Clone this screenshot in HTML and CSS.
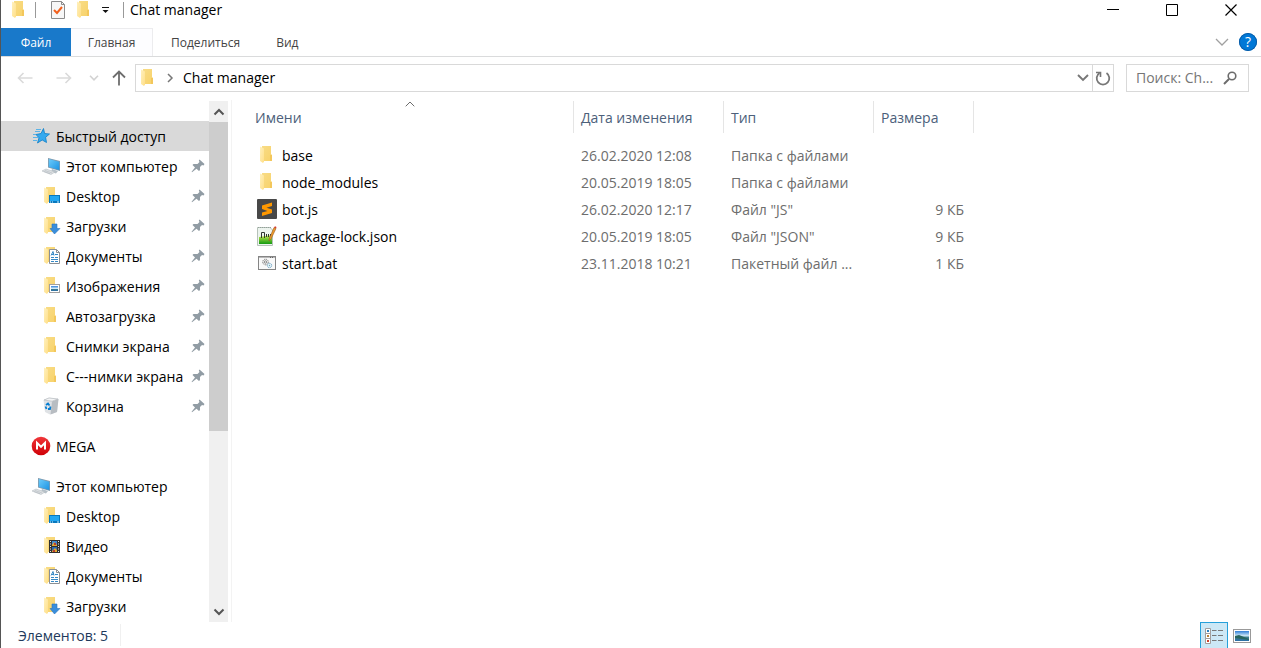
FILE: index.html
```html
<!DOCTYPE html>
<html lang="ru">
<head>
<meta charset="utf-8">
<meta name="viewport" content="width=device-width, initial-scale=1">
<title>Chat manager</title>
<link rel="stylesheet" href="styles.css">
</head>
<body>
<svg class="sprite" aria-hidden="true">
  <defs>
    <linearGradient id="g-back" x1="0" y1="0" x2="1" y2="1"><stop offset="0" stop-color="#f8dc86"/><stop offset="1" stop-color="#f8d26a"/></linearGradient>
    <linearGradient id="g-flap" x1="0" y1="0" x2="1" y2="1"><stop offset="0" stop-color="#fff0bd"/><stop offset="1" stop-color="#ffdf88"/></linearGradient>
    <linearGradient id="g-screen" x1="0" y1="0" x2="1" y2="1"><stop offset="0" stop-color="#6ccbfa"/><stop offset="1" stop-color="#1c93e3"/></linearGradient>
    <linearGradient id="g-mega" x1="0" y1="0" x2="0" y2="1"><stop offset="0" stop-color="#f0373a"/><stop offset="1" stop-color="#cf0007"/></linearGradient>
    <linearGradient id="g-green" x1="0" y1="0" x2="0" y2="1"><stop offset="0" stop-color="#c9e94e"/><stop offset="1" stop-color="#149a12"/></linearGradient>
    <linearGradient id="g-photo" x1="0" y1="0" x2="0" y2="1"><stop offset="0" stop-color="#2f7fd8"/><stop offset="0.5" stop-color="#d5edf8"/><stop offset="0.6" stop-color="#3f7f8c"/><stop offset="1" stop-color="#2b6fa8"/></linearGradient>
    <symbol id="folder" viewBox="0 0 20 20">
      <path d="M5 1H14V9L15 10V16H5Z" fill="url(#g-back)"/>
      <path d="M13 10H15V16H13Z" fill="#f3c75c"/>
      <path d="M3 1.500L7 3.500V16.500L6 18L3 16Z" fill="url(#g-flap)"/>
    </symbol>
    <symbol id="computer" viewBox="0 0 20 20">
      <path d="M7 2L19 5V15L7 11.500Z" fill="#7f98ab"/>
      <path d="M7.800 3L18.300 5.700V14L7.800 11Z" fill="url(#g-screen)"/>
      <path d="M11 13L17 15L15 17.500L10 16Z" fill="#b4bfc7"/>
      <path d="M1 15L5 13L14 16L10 18.500Z" fill="#dce0e3" stroke="#b7bdc2" stroke-width=".6"/>
      <path d="M4 14.500L11 17M3 15.500L9 17.700" stroke="#aeb5bb" stroke-width=".5"/>
    </symbol>
    <symbol id="desktop" viewBox="0 0 20 20">
      <use href="#folder"/>
      <rect x="8" y="9" width="11" height="8" fill="#0878bd"/><rect x="9" y="10" width="9" height="5" fill="#22a7f2"/>
      <path d="M9 16H10M11 16H12M16 16H18" stroke="#d8f1ff"/>
    </symbol>
    <symbol id="downloads" viewBox="0 0 20 20">
      <use href="#folder"/>
      <path d="M11 8H16V12.500H19L13.500 18L9 12.500H11Z" fill="#3a8edb" stroke="#2875bd" stroke-width=".6"/>
    </symbol>
    <symbol id="documents" viewBox="0 0 20 20">
      <use href="#folder"/>
      <path d="M8.500 3.500H15.500L18.500 6.500V17.500H8.500Z" fill="#fff" stroke="#8b8f93"/>
      <path d="M15.500 3.500V6.500H18.500" fill="none" stroke="#8b8f93"/>
      <path d="M10 9.500L12 5.500L13 9.500M10.500 8.500H13M14 8.500H17M10 11.500H13M14 11.500H17M10 13.500H17M10 15.500H13M14 15.500H17" fill="none" stroke="#3689c5"/>
    </symbol>
    <symbol id="pictures" viewBox="0 0 20 20">
      <use href="#folder"/>
      <rect x="8.500" y="8.500" width="10" height="8" fill="#fff" stroke="#a0a0a0"/>
      <rect x="10" y="10" width="7" height="5" fill="url(#g-photo)"/>
    </symbol>
    <symbol id="video" viewBox="0 0 20 20">
      <use href="#folder"/>
      <rect x="8" y="4" width="11" height="13" fill="#303030"/>
      <path d="M9.500 5V17M17.500 5V17" stroke="#e8e8e8" stroke-dasharray="1 1.500"/>
      <rect x="11" y="5" width="5" height="5" fill="#3c86d2"/><rect x="11" y="11" width="5" height="5" fill="#2c69b1"/>
      <path d="M11 9L13 6L16 9V10H11ZM11 15L14 12L16 14V16H11Z" fill="#e1a82f"/>
      <path d="M13 7H15V9H13ZM12 14H14V16H12Z" fill="#b93c31"/>
    </symbol>
    <symbol id="bin" viewBox="0 0 20 20">
      <path d="M2.500 4L8 1.500L17.500 3L16 16L9 18.500L4 16Z" fill="#dfe2e5"/>
      <path d="M11 5.500L17.500 3L16 16L9.500 18.500Z" fill="#b8bdc2"/>
      <path d="M3 4L8 2L17 3L11 5.200Z" fill="#f4f5f6" stroke="#aeb4b9" stroke-width=".6"/>
      <path d="M5 9L7 7.500L8.500 9.500M9.500 10.500L9 13H7M5.500 13L4.500 10.500" fill="none" stroke="#087ed1" stroke-width="1.800"/>
    </symbol>
    <symbol id="star" viewBox="0 0 20 20">
      <path d="M12.500 2.500L13.600 7.500L18.500 8L14.600 11.300L15.500 16.500L11.200 14L6.500 17L8 11.800L5 8.500L10 7.500Z" fill="#35a9ef" stroke="#0c7dc7" stroke-width=".8"/>
      <path d="M5 3.500H10M4 5.500H9M2 8.500H5M2 11.500H7M2 14.500H6" stroke="#4cafe9" stroke-width=".9"/>
    </symbol>
    <symbol id="mega" viewBox="0 0 20 20">
      <circle cx="10" cy="10" r="9.300" fill="url(#g-mega)"/>
      <path d="M6 13.500V6.800L10 10.800L14 6.800V13.500" fill="none" stroke="#fff" stroke-width="2"/>
    </symbol>
    <symbol id="pin" viewBox="0 0 14 14">
      <path d="M8.500 .5L13.500 5L12.500 6.500L11 6L9 8V11L8 12L5.500 9.700L1 13.200L.6 12.800L4 8.500L1.500 6L2.500 5H6.500L8.500 3L7.800 1.500Z" fill="#919ca4"/>
    </symbol>
    <symbol id="sublime" viewBox="0 0 20 20">
      <rect width="20" height="20" rx="1" fill="#484848"/>
      <path d="M15 3.500V7L9.500 8.700L15 10.500V14L5 17V13.600L10.500 11.900L5 10V6.600Z" fill="#ff9800"/>
    </symbol>
    <symbol id="notepad" viewBox="0 0 20 20">
      <path d="M.5 1.500H13L15.500 4V19.500H.5Z" fill="#edf4ef" stroke="#b6c2b9"/>
      <path d="M1 1.500H15" stroke="#93a09a" stroke-dasharray="1 1"/>
      <path d="M2 11L15 9V18H2Z" fill="url(#g-green)"/>
      <path d="M4.500 12V6.500H7.500V12M9.500 11V8M11.500 11V8M13.500 10V8" fill="none" stroke="#303630"/>
      <path d="M17 1.500L19 2.500L14 13L12 15L12.500 12Z" fill="#ee9b29" stroke="#995a27" stroke-width=".6"/>
      <path d="M17 1.500L18 .3L19.500 1L19 2.500Z" fill="#d33d33"/>
    </symbol>
    <symbol id="batch" viewBox="0 0 20 20">
      <rect x="1.500" y="3.500" width="17" height="13" fill="#f9f9f9" stroke="#858585"/>
      <path d="M2 4.500H18" stroke="#b9b9b9"/><path d="M13 4.500H17" stroke="#666" stroke-dasharray="1 1"/>
      <circle cx="8.500" cy="9" r="2.800" fill="#eee" stroke="#7a7a7a" stroke-dasharray="1.200 .7"/><circle cx="8.500" cy="9" r="1.200" fill="none" stroke="#777" stroke-width=".8"/>
      <circle cx="12.500" cy="12.500" r="2.200" fill="#e6f4fc" stroke="#6d9fbd" stroke-dasharray="1.200 .6"/><circle cx="12.500" cy="12.500" r=".7" fill="#7aa"/>
    </symbol>
  </defs>
</svg>

<div class="window">
  <header class="titlebar">
    <svg class="icon"><use href="#folder"/></svg>
    <span class="bar bar-first"></span>
    <button class="plain quick" aria-label="Свойства"><svg width="16" height="20" viewBox="0 0 16 20"><path d="M1.500 1.500H11.500L14.500 4.500V18.500H1.500Z" fill="#f7f7f7" stroke="#8c8c8c"/><path d="M11.500 1.500V4.500H14.500" fill="none" stroke="#8c8c8c"/><path d="M4 10L7 13L12 7" fill="none" stroke="#f1601d" stroke-width="2"/></svg></button>
    <button class="plain" aria-label="Новая папка"><svg class="icon"><use href="#folder"/></svg></button>
    <button class="plain customize" aria-label="Настройка панели"><svg width="8" height="8" viewBox="0 0 8 8"><path d="M0 1.500H7" stroke="#111"/><path d="M.5 4H6.500L3.500 7Z" fill="#111"/></svg></button>
    <span class="bar"></span>
    <h1 class="title">Chat manager</h1>
    <div class="controls">
      <button class="plain" aria-label="Свернуть"><svg width="12" height="12" viewBox="0 0 12 12"><path d="M0 5.500H12" stroke="#000"/></svg></button>
      <button class="plain" aria-label="Развернуть"><svg width="12" height="12" viewBox="0 0 12 12"><path d="M.5.5H11.500V11.500H.5Z" fill="none" stroke="#000"/></svg></button>
      <button class="plain" aria-label="Закрыть"><svg width="12" height="12" viewBox="0 0 12 12"><path d="M.5.5L11.500 11.500M11.500.5L.5 11.500" stroke="#000" stroke-width="1.200"/></svg></button>
    </div>
  </header>

  <nav class="ribbon">
    <button class="tab tab-file">Файл</button>
    <button class="tab tab-home">Главная</button>
    <button class="tab">Поделиться</button>
    <button class="tab">Вид</button>
    <div class="ribbon-end">
      <button class="plain" aria-label="Развернуть ленту"><svg width="14" height="8" viewBox="0 0 14 8"><path d="M1 1L7 7L13 1" fill="none" stroke="#a0a0a0" stroke-width="1.300"/></svg></button>
      <button class="plain help" aria-label="Справка">?</button>
    </div>
  </nav>

  <div class="address-row">
    <button class="plain" aria-label="Назад"><svg width="16" height="12" viewBox="0 0 16 12"><path d="M15.500 6H1.500M6.500 1L1.500 6L6.500 11" fill="none" stroke="#dadada" stroke-width="1.600"/></svg></button>
    <button class="plain forward" aria-label="Вперёд"><svg width="16" height="12" viewBox="0 0 16 12"><path d="M.5 6H14.500M9.500 1L14.500 6L9.500 11" fill="none" stroke="#dadada" stroke-width="1.600"/></svg></button>
    <button class="plain recent" aria-label="Последние"><svg width="10" height="6" viewBox="0 0 10 6"><path d="M1 .8L5 4.800L9 .8" fill="none" stroke="#d2d2d2" stroke-width="1.600"/></svg></button>
    <button class="plain up" aria-label="Вверх"><svg width="14" height="16" viewBox="0 0 14 16"><path d="M7 15.500V1.500M1 7.500L7 1.500L13 7.500" fill="none" stroke="#6e6e6e" stroke-width="1.800"/></svg></button>
    <div class="address">
      <svg class="icon"><use href="#folder"/></svg>
      <svg class="crumb" width="7" height="10" viewBox="0 0 7 10"><path d="M1 1L5 5L1 9" fill="none" stroke="#777" stroke-width="1.500"/></svg>
      <span class="path">Chat manager</span>
      <button class="plain expand" aria-label="Журнал"><svg width="12" height="8" viewBox="0 0 12 8"><path d="M1 1L6 6L11 1" fill="none" stroke="#777" stroke-width="1.900"/></svg></button>
      <button class="plain refresh" aria-label="Обновить"><svg width="16" height="16" viewBox="0 0 16 16"><path d="M4.500 3A6.300 6.300 0 1 0 11.500 3" fill="none" stroke="#777" stroke-width="1.800"/><path d="M1 2.500H5.500V7" fill="none" stroke="#777" stroke-width="1.600"/></svg></button>
    </div>
    <div class="search">
      <input class="search-input" type="text" aria-label="Поиск" placeholder="Поиск: Ch...">
      <svg width="14" height="14" viewBox="0 0 14 14"><circle cx="9" cy="5" r="3.800" fill="none" stroke="#6c6c6c" stroke-width="1.600"/><path d="M6 8L1 13" stroke="#6c6c6c" stroke-width="2"/></svg>
    </div>
  </div>

  <main class="content">
    <aside class="sidebar">
      <div class="tree">
        <ul class="group">
          <li class="node node-top selected"><svg class="icon"><use href="#star"/></svg><span class="label">Быстрый доступ</span></li>
          <li class="node"><svg class="icon"><use href="#computer"/></svg><span class="label">Этот компьютер</span><svg class="pin"><use href="#pin"/></svg></li>
          <li class="node"><svg class="icon"><use href="#desktop"/></svg><span class="label">Desktop</span><svg class="pin"><use href="#pin"/></svg></li>
          <li class="node"><svg class="icon"><use href="#downloads"/></svg><span class="label">Загрузки</span><svg class="pin"><use href="#pin"/></svg></li>
          <li class="node"><svg class="icon"><use href="#documents"/></svg><span class="label">Документы</span><svg class="pin"><use href="#pin"/></svg></li>
          <li class="node"><svg class="icon"><use href="#pictures"/></svg><span class="label">Изображения</span><svg class="pin"><use href="#pin"/></svg></li>
          <li class="node"><svg class="icon"><use href="#folder"/></svg><span class="label">Автозагрузка</span><svg class="pin"><use href="#pin"/></svg></li>
          <li class="node"><svg class="icon"><use href="#folder"/></svg><span class="label">Снимки экрана</span><svg class="pin"><use href="#pin"/></svg></li>
          <li class="node"><svg class="icon"><use href="#folder"/></svg><span class="label">С---нимки экрана</span><svg class="pin"><use href="#pin"/></svg></li>
          <li class="node"><svg class="icon"><use href="#bin"/></svg><span class="label">Корзина</span><svg class="pin"><use href="#pin"/></svg></li>
        </ul>
        <ul class="group">
          <li class="node node-top"><svg class="icon"><use href="#mega"/></svg><span class="label">MEGA</span></li>
        </ul>
        <ul class="group">
          <li class="node node-top"><svg class="icon"><use href="#computer"/></svg><span class="label">Этот компьютер</span></li>
          <li class="node"><svg class="icon"><use href="#desktop"/></svg><span class="label">Desktop</span></li>
          <li class="node"><svg class="icon"><use href="#video"/></svg><span class="label">Видео</span></li>
          <li class="node"><svg class="icon"><use href="#documents"/></svg><span class="label">Документы</span></li>
          <li class="node"><svg class="icon"><use href="#downloads"/></svg><span class="label">Загрузки</span></li>
        </ul>
      </div>
      <div class="scrollbar">
        <button class="plain arrow" aria-label="Прокрутить вверх"><svg width="12" height="8" viewBox="0 0 12 8"><path d="M1.500 6.500L6 2L10.500 6.500" fill="none" stroke="#555" stroke-width="2"/></svg></button>
        <div class="track"><div class="thumb"></div></div>
        <button class="plain arrow" aria-label="Прокрутить вниз"><svg width="12" height="8" viewBox="0 0 12 8"><path d="M1.500 1.500L6 6L10.500 1.500" fill="none" stroke="#555" stroke-width="2"/></svg></button>
      </div>
    </aside>

    <section class="files">
      <table class="file-table">
        <colgroup><col class="col-name"><col class="col-date"><col class="col-type"><col class="col-size"></colgroup>
        <thead>
          <tr><th class="sorted">Имени<svg class="sort" width="10" height="6" viewBox="0 0 10 6"><path d="M.7 5.300L5 1L9.300 5.300" fill="none" stroke="#6d6d6d"/></svg></th><th>Дата изменения</th><th>Тип</th><th>Размера</th></tr>
        </thead>
        <tbody>
          <tr><td><span class="file"><svg class="icon"><use href="#folder"/></svg>base</span></td><td>26.02.2020 12:08</td><td>Папка с файлами</td><td></td></tr>
          <tr><td><span class="file"><svg class="icon"><use href="#folder"/></svg>node_modules</span></td><td>20.05.2019 18:05</td><td>Папка с файлами</td><td></td></tr>
          <tr><td><span class="file"><svg class="icon"><use href="#sublime"/></svg>bot.js</span></td><td>26.02.2020 12:17</td><td>Файл "JS"</td><td>9 КБ</td></tr>
          <tr><td><span class="file"><svg class="icon"><use href="#notepad"/></svg>package-lock.json</span></td><td>20.05.2019 18:05</td><td>Файл "JSON"</td><td>9 КБ</td></tr>
          <tr><td><span class="file"><svg class="icon"><use href="#batch"/></svg>start.bat</span></td><td>23.11.2018 10:21</td><td>Пакетный файл ...</td><td>1 КБ</td></tr>
        </tbody>
      </table>
    </section>
  </main>

  <footer class="status">
    <span class="count">Элементов: 5</span>
    <div class="views">
      <button class="plain view view-active" aria-label="Таблица"><svg width="20" height="18" viewBox="0 0 20 18"><path d="M1.500 1.500H6.500V6.500H1.500ZM1.500 6.500H6.500V11.500H1.500ZM1.500 11.500H6.500V16.500H1.500Z" fill="#fff" stroke="#a19d9c"/><path d="M3 3H5V5H3Z" fill="#2b7fc0"/><path d="M3 8H5V10H3Z" fill="#b98035"/><path d="M3 13H5V15H3Z" fill="#d0402b"/><path d="M8 3.500H12.500M14 3.500H19M8 8.500H12.500M14 8.500H19M8 13.500H12.500M14 13.500H19" stroke="#777"/></svg></button>
      <button class="plain view" aria-label="Крупные значки"><svg width="18" height="14" viewBox="0 0 18 14"><rect x=".5" y=".5" width="17" height="13" fill="#fff" stroke="#999"/><rect x="2" y="2" width="14" height="10" fill="url(#g-photo)"/><path d="M2 7L6 6L16 10V11L2 9Z" fill="#28665f"/></svg></button>
    </div>
  </footer>
</div>
</body>
</html>
```
FILE: styles.css
```css
* { box-sizing: border-box; }

body {
  margin: 0;
  background: #fff;
  color: #000;
  font: 14px/20px "Open Sans", "Noto Sans", sans-serif;
}

.sprite { position: absolute; width: 0; height: 0; }
svg { display: block; flex: none; }
.icon { width: 20px; height: 20px; }

.window {
  display: flex;
  flex-direction: column;
  min-height: 100vh;
  border-left: 1px solid #555;
}

.plain {
  display: flex;
  align-items: center;
  justify-content: center;
  flex: none;
  padding: 0;
  border: 0;
  background: none;
  font: inherit;
}

/* Title bar */
.titlebar { display: flex; align-items: center; height: 28px; padding: 0 24px 9px 8px; }
.bar { width: 1px; height: 16px; background: #999; }
.bar-first { margin: 0 14px 0 6px; }
.quick { margin-right: 8px; }
.customize { margin: 0 13px 0 8px; }
.title { margin: 0 0 0 6px; font-size: 14px; font-weight: 400; }
.controls { display: flex; gap: 47px; margin-left: auto; }

/* Ribbon */
.ribbon { display: flex; height: 29px; border-bottom: 1px solid #dadbdc; font-size: 12px; }
.tab { padding: 1px 18px 0; border: 0; background: none; color: #444; font: inherit; }
.tab-file { width: 70px; background: #1979ca; color: #fff; }
.tab-home { width: 82px; padding: 0; border: solid #ececee; border-width: 1px 1px 0 0; background: #fdfdff; }
.ribbon-end { display: flex; align-items: center; gap: 10px; margin-left: auto; padding-right: 4px; }
.help { width: 18px; height: 18px; border-radius: 50%; background: #0078d7; box-shadow: inset 0 0 0 1px #0a5ca6; color: #fff; font-size: 14px; }

/* Address row */
.address-row { display: flex; align-items: center; padding: 7px 12px 8px 16px; }
.forward { margin-left: 23px; }
.recent { margin-left: 17px; }
.up { margin: 0 9px 0 13px; }
.address { display: flex; align-items: center; flex: 1; height: 28px; border: 1px solid #d9d9d9; padding-left: 2px; }
.crumb { margin: 0 9px; }
.path { flex: 1; }
.expand { width: 18px; }
.refresh { width: 21px; height: 26px; border-left: 1px solid #d9d9d9; }
.search { display: flex; align-items: center; width: 123px; height: 28px; margin-left: 12px; padding: 0 11px 0 9px; border: 1px solid #d9d9d9; }
.search-input { flex: 1; min-width: 0; padding: 0; border: 0; outline: 0; font: inherit; }
.search-input::placeholder { color: #767676; opacity: 1; }

/* Navigation tree */
.content { display: flex; flex: 1; }
.sidebar { display: flex; width: 231px; padding-right: 3px; border-right: 1px solid #f3f3f3; }
.tree { flex: 1; min-width: 0; padding-top: 21px; }
.group { display: flex; flex-direction: column; margin: 0 0 10px; padding: 0; list-style: none; }
.group:last-child { margin-bottom: 0; }
.node { display: flex; align-items: center; gap: 5px; height: 30px; padding: 0 4px 0 40px; }
.node-top { padding-left: 30px; }
.selected { background: #d9d9d9; }
.label { flex: 1; min-width: 0; padding-top: 2px; overflow: hidden; white-space: nowrap; }
.pin { width: 14px; height: 14px; margin-left: -3px; }
.scrollbar { display: flex; flex-direction: column; width: 19px; margin-top: 1px; background: #f0f0f0; }
.arrow { height: 21px; }
.track { flex: 1; }
.thumb { height: 309px; background: #cdcdcd; }

/* File list */
.files { flex: 1; min-width: 0; padding-top: 1px; }
.file-table { width: 742px; table-layout: fixed; border-collapse: separate; border-spacing: 0; text-align: left; }
.col-name { width: 342px; }
.col-date, .col-type { width: 150px; }
.col-size { width: 100px; }
.file-table th { height: 32px; padding: 2px 7px 0; border-right: 1px solid #e5e5e5; color: #4c607a; font-weight: 400; }
.file-table .sorted { position: relative; padding-left: 23px; }
.sort { position: absolute; top: 0; left: 50%; transform: translateX(2px); }
.file-table tbody::before { content: ""; display: block; height: 9px; }
.file-table td { height: 27px; padding: 0 7px; color: #6d6d6d; white-space: nowrap; }
.file-table td:first-child { padding-left: 25px; color: #000; }
.file-table td:last-child { padding-right: 10px; text-align: right; }
.file { display: flex; align-items: center; gap: 5px; }
.file .icon { margin-bottom: 2px; }

/* Status bar */
.status { display: flex; align-items: center; justify-content: space-between; height: 26px; padding: 0 5px 0 17px; color: #1e395b; }
.count { padding: 2px 12px 0 0; border-right: 1px solid #f0f0f0; }
.views { display: flex; align-self: stretch; }
.view { width: 28px; padding-top: 1px; }
.view-active { border: solid #26a0da; border-width: 1px 1px 0; background: #cce8f6; }
```
